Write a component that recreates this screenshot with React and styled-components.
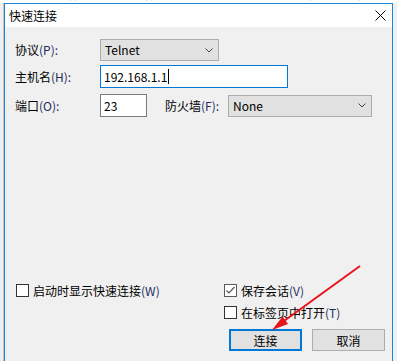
import React from 'react';
import styled, { createGlobalStyle, css } from 'styled-components';

const GlobalStyle = createGlobalStyle`
  html, body {
    margin: 0;
    padding: 0;
    background: #f0f0f0;
    overflow: hidden;
  }
  body {
    font-family: "Noto Sans CJK SC", "Noto Sans", sans-serif;
    font-size: 12px;
    color: #000;
  }
`;

const Page = styled.div`
  position: relative;
  width: 397px;
  height: 361px;
  overflow: hidden;
  display: flex;
  flex-direction: column;
`;

const MenuStrip = styled.div`
  height: 3px;
  overflow: hidden;
  background: #fff;
  white-space: nowrap;
  span {
    display: block;
    margin-top: -14px;
    line-height: 16px;
    font-size: 12px;
    color: #333;
    word-spacing: 14px;
  }
`;

const Stage = styled.div`
  flex: 1;
  display: flex;
  min-height: 0;
`;

const Gutter = styled.div`
  width: 4px;
  background: #f0f0f0;
  box-shadow: inset -1px 0 #c4c4c4;
`;

const Dialog = styled.div`
  width: 387px;
  border: 1px solid #1a84d8;
  border-bottom: none;
  background: #f0f0f0;
  display: flex;
  flex-direction: column;
`;

const TitleBar = styled.div`
  height: 23px;
  background: #fff;
  display: flex;
  align-items: center;
  justify-content: space-between;
  padding: 0 6px 0 4px;
  font-size: 12px;
`;

const Body = styled.div`
  flex: 1;
  display: flex;
  flex-direction: column;
  padding: 12px 7px 10px 10px;
`;

const Row = styled.div`
  display: flex;
  align-items: center;
  margin-top: ${p => p.$gap || 0}px;
`;

const Label = styled.div`
  width: ${p => p.$w}px;
  flex: none;
  line-height: 16px;
  white-space: nowrap;
  margin-left: ${p => p.$ml || 0}px;
`;

const Key = styled.span`
  color: #1f2d5c;
`;

const field = css`
  box-sizing: border-box;
  display: flex;
  align-items: center;
  padding-left: 4px;
  font-size: 12px;
  line-height: 16px;
`;

const Select = styled.div`
  ${field}
  width: ${p => p.$w}px;
  height: 22px;
  background: #e1e1e1;
  border: 1px solid #adadad;
  justify-content: space-between;
  padding-right: 5px;
  svg { display: block; }
`;

const Input = styled.div`
  ${field}
  width: ${p => p.$w}px;
  height: 23px;
  background: #fff;
  border: 1px solid ${p => (p.$focus ? '#0078d7' : '#7a7a7a')};
  padding-left: 3px;
`;

const Caret = styled.span`
  display: inline-block;
  width: 1px;
  height: 15px;
  background: #000;
  margin-left: 1px;
`;

const Filler = styled.div`
  flex: 1;
`;

const Footer = styled.div`
  display: flex;
  justify-content: space-between;
  align-items: flex-start;
`;

const Column = styled.div`
  display: flex;
  flex-direction: column;
  align-items: flex-start;
  padding-left: ${p => p.$pl || 0}px;
`;

const Check = styled.div`
  display: flex;
  align-items: center;
  height: 14px;
  margin-bottom: ${p => p.$mb || 0}px;
  white-space: nowrap;
`;

const Box = styled.span`
  box-sizing: border-box;
  width: 13px;
  height: 13px;
  border: 1px solid ${p => (p.$checked ? '#5a5a5a' : '#333')};
  background: #fff;
  margin-right: 4px;
  display: flex;
  align-items: center;
  justify-content: center;
`;

const Buttons = styled.div`
  display: flex;
  gap: 10px;
  margin-left: 5px;
`;

const Button = styled.div`
  box-sizing: border-box;
  width: 73px;
  height: 22px;
  background: #e1e1e1;
  border: ${p => (p.$primary ? '2px solid #0078d7' : '1px solid #adadad')};
  display: flex;
  align-items: center;
  justify-content: center;
  font-size: 12px;
`;

const Overlay = styled.svg`
  position: absolute;
  left: 0;
  top: 0;
  pointer-events: none;
`;

const Chevron = () => (
  <svg width="8" height="5" viewBox="0 0 8 5">
    <path d="M0.5 0.5 L4 4 L7.5 0.5" fill="none" stroke="#444" strokeWidth="1" />
  </svg>
);

const Tick = () => (
  <svg width="11" height="11" viewBox="0 0 11 11">
    <path d="M1.5 5.5 L4 8 L9.5 2" fill="none" stroke="#555" strokeWidth="1.2" />
  </svg>
);

const CheckItem = ({ checked, text, mnemonic, ...rest }) => (
  <Check {...rest}>
    <Box $checked={checked}>{checked && <Tick />}</Box>
    {text}<Key>({mnemonic})</Key>
  </Check>
);

export default function App() {
  return (
    <>
      <GlobalStyle />
      <Page>
        <MenuStrip>
          <span>接字段 会话管理 新会话 传输 工具 帮助 数据服务 窗口</span>
        </MenuStrip>
        <Stage>
          <Gutter />
          <Dialog>
            <TitleBar>
              <span>快速连接</span>
              <svg width="11" height="11" viewBox="0 0 11 11">
                <path d="M0.5 0.5 L10.5 10.5 M10.5 0.5 L0.5 10.5" stroke="#000" strokeWidth="1" />
              </svg>
            </TitleBar>
            <Body>
              <Row>
                <Label $w={85}>协议<Key>(P):</Key></Label>
                <Select $w={119}>Telnet<Chevron /></Select>
              </Row>
              <Row $gap={4}>
                <Label $w={85}>主机名<Key>(H):</Key></Label>
                <Input $w={188} $focus>192.168.1.1<Caret /></Input>
              </Row>
              <Row $gap={6}>
                <Label $w={85}>端口<Key>(O):</Key></Label>
                <Input $w={47}>23</Input>
                <Label $w={63} $ml={18}>防火墙<Key>(F):</Key></Label>
                <Select $w={144}>None<Chevron /></Select>
              </Row>
              <Filler />
              <Footer>
                <Column $pl={1}>
                  <CheckItem text="启动时显示快速连接" mnemonic="W" />
                </Column>
                <Column>
                  <CheckItem checked text="保存会话" mnemonic="V" $mb={8} />
                  <CheckItem text="在标签页中打开" mnemonic="T" $mb={10} />
                  <Buttons>
                    <Button $primary>连接</Button>
                    <Button>取消</Button>
                  </Buttons>
                </Column>
              </Footer>
            </Body>
          </Dialog>
        </Stage>
        <Overlay width="397" height="361" viewBox="0 0 397 361">
          <line x1="360" y1="266" x2="284" y2="321" stroke="#e8141c" strokeWidth="2" />
          <polygon points="272,330 282.6,316.4 288,324" fill="#e8141c" />
        </Overlay>
      </Page>
    </>
  );
}
